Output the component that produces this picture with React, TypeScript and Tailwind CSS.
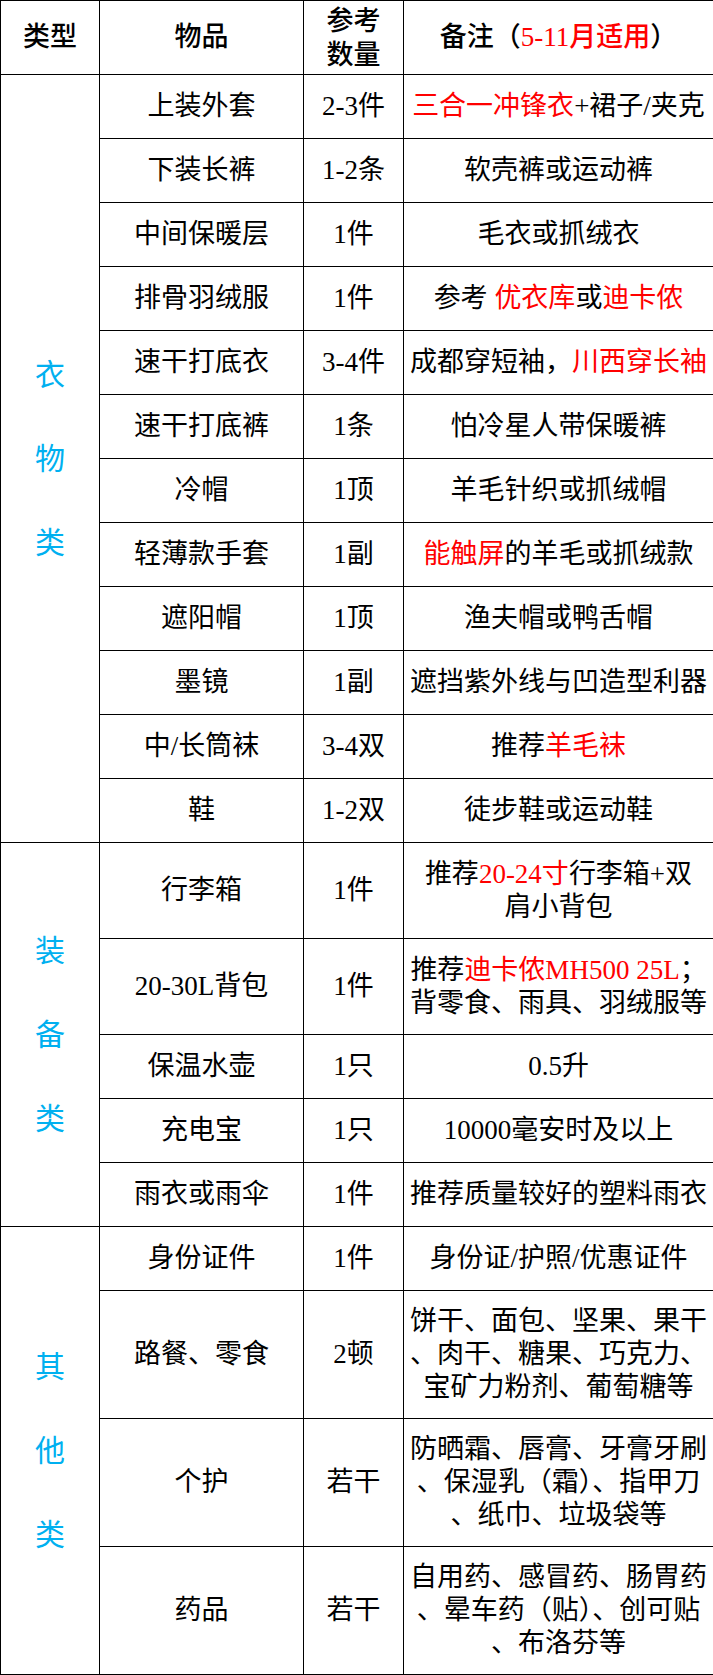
import React from "react";

type Part = string | { red: string };
type Row = { item: string; qty: string; note: Part[][]; h: number };

const R = (s: string) => ({ red: s });

const groups: { name: string[]; rows: Row[] }[] = [
  {
    name: ["衣", "物", "类"],
    rows: [
      { item: "上装外套", qty: "2-3件", note: [[R("三合一冲锋衣"), "+裙子/夹克"]], h: 64 },
      { item: "下装长裤", qty: "1-2条", note: [["软壳裤或运动裤"]], h: 64 },
      { item: "中间保暖层", qty: "1件", note: [["毛衣或抓绒衣"]], h: 64 },
      { item: "排骨羽绒服", qty: "1件", note: [["参考 ", R("优衣库"), "或", R("迪卡侬")]], h: 64 },
      { item: "速干打底衣", qty: "3-4件", note: [["成都穿短袖，", R("川西穿长袖")]], h: 64 },
      { item: "速干打底裤", qty: "1条", note: [["怕冷星人带保暖裤"]], h: 64 },
      { item: "冷帽", qty: "1顶", note: [["羊毛针织或抓绒帽"]], h: 64 },
      { item: "轻薄款手套", qty: "1副", note: [[R("能触屏"), "的羊毛或抓绒款"]], h: 64 },
      { item: "遮阳帽", qty: "1顶", note: [["渔夫帽或鸭舌帽"]], h: 64 },
      { item: "墨镜", qty: "1副", note: [["遮挡紫外线与凹造型利器"]], h: 64 },
      { item: "中/长筒袜", qty: "3-4双", note: [["推荐", R("羊毛袜")]], h: 64 },
      { item: "鞋", qty: "1-2双", note: [["徒步鞋或运动鞋"]], h: 64 },
    ],
  },
  {
    name: ["装", "备", "类"],
    rows: [
      { item: "行李箱", qty: "1件", note: [["推荐", R("20-24寸"), "行李箱+双"], ["肩小背包"]], h: 96 },
      {
        item: "20-30L背包",
        qty: "1件",
        note: [["推荐", R("迪卡侬MH500 25L"), "；"], ["背零食、雨具、羽绒服等"]],
        h: 96,
      },
      { item: "保温水壶", qty: "1只", note: [["0.5升"]], h: 64 },
      { item: "充电宝", qty: "1只", note: [["10000毫安时及以上"]], h: 64 },
      { item: "雨衣或雨伞", qty: "1件", note: [["推荐质量较好的塑料雨衣"]], h: 64 },
    ],
  },
  {
    name: ["其", "他", "类"],
    rows: [
      { item: "身份证件", qty: "1件", note: [["身份证/护照/优惠证件"]], h: 64 },
      {
        item: "路餐、零食",
        qty: "2顿",
        note: [["饼干、面包、坚果、果干"], ["、肉干、糖果、巧克力、"], ["宝矿力粉剂、葡萄糖等"]],
        h: 128,
      },
      {
        item: "个护",
        qty: "若干",
        note: [["防晒霜、唇膏、牙膏牙刷"], ["、保湿乳（霜）、指甲刀"], ["、纸巾、垃圾袋等"]],
        h: 128,
      },
      {
        item: "药品",
        qty: "若干",
        note: [["自用药、感冒药、肠胃药"], ["、晕车药（贴）、创可贴"], ["、布洛芬等"]],
        h: 128,
      },
    ],
  },
];

const cell = "border border-black text-center align-middle p-0";

function Note({ lines }: { lines: Part[][] }) {
  return (
    <div className="flex flex-col items-center leading-[33px] whitespace-nowrap">
      {lines.map((line, i) => (
        <div key={i}>
          {line.map((p, j) =>
            typeof p === "string" ? (
              <span key={j}>{p}</span>
            ) : (
              <span key={j} className="text-[#ff0000]">
                {p.red}
              </span>
            )
          )}
        </div>
      ))}
    </div>
  );
}

export default function App() {
  return (
    <div className="bg-white w-[713px] font-['Liberation_Serif','Noto_Sans_CJK_SC',serif] text-[27px] text-black">
      <table className="w-[713px] table-fixed border-collapse">
        <colgroup>
          <col className="w-[99px]" />
          <col className="w-[204px]" />
          <col className="w-[100px]" />
          <col className="w-[310px]" />
        </colgroup>
        <thead>
          <tr className="h-[74px]">
            <th className={cell + " font-medium"}>类型</th>
            <th className={cell + " font-medium"}>物品</th>
            <th className={cell + " font-medium leading-[34px]"}>
              参考
              <br />
              数量
            </th>
            <th className={cell + " font-medium whitespace-nowrap"}>
              备注（<span className="text-[#ff0000]">5-11月适用</span>）
            </th>
          </tr>
        </thead>
        <tbody>
          {groups.map((g) =>
            g.rows.map((r, i) => (
              <tr key={g.name[0] + i} style={{ height: r.h }}>
                {i === 0 && (
                  <td className={cell} rowSpan={g.rows.length}>
                    <div className="flex flex-col items-center gap-[54px] text-[30px] leading-[30px] text-[#00b0f0]">
                      {g.name.map((c) => (
                        <span key={c}>{c}</span>
                      ))}
                    </div>
                  </td>
                )}
                <td className={cell + " whitespace-nowrap"}>{r.item}</td>
                <td className={cell + " whitespace-nowrap"}>{r.qty}</td>
                <td className={cell}>
                  <Note lines={r.note} />
                </td>
              </tr>
            ))
          )}
        </tbody>
      </table>
    </div>
  );
}
